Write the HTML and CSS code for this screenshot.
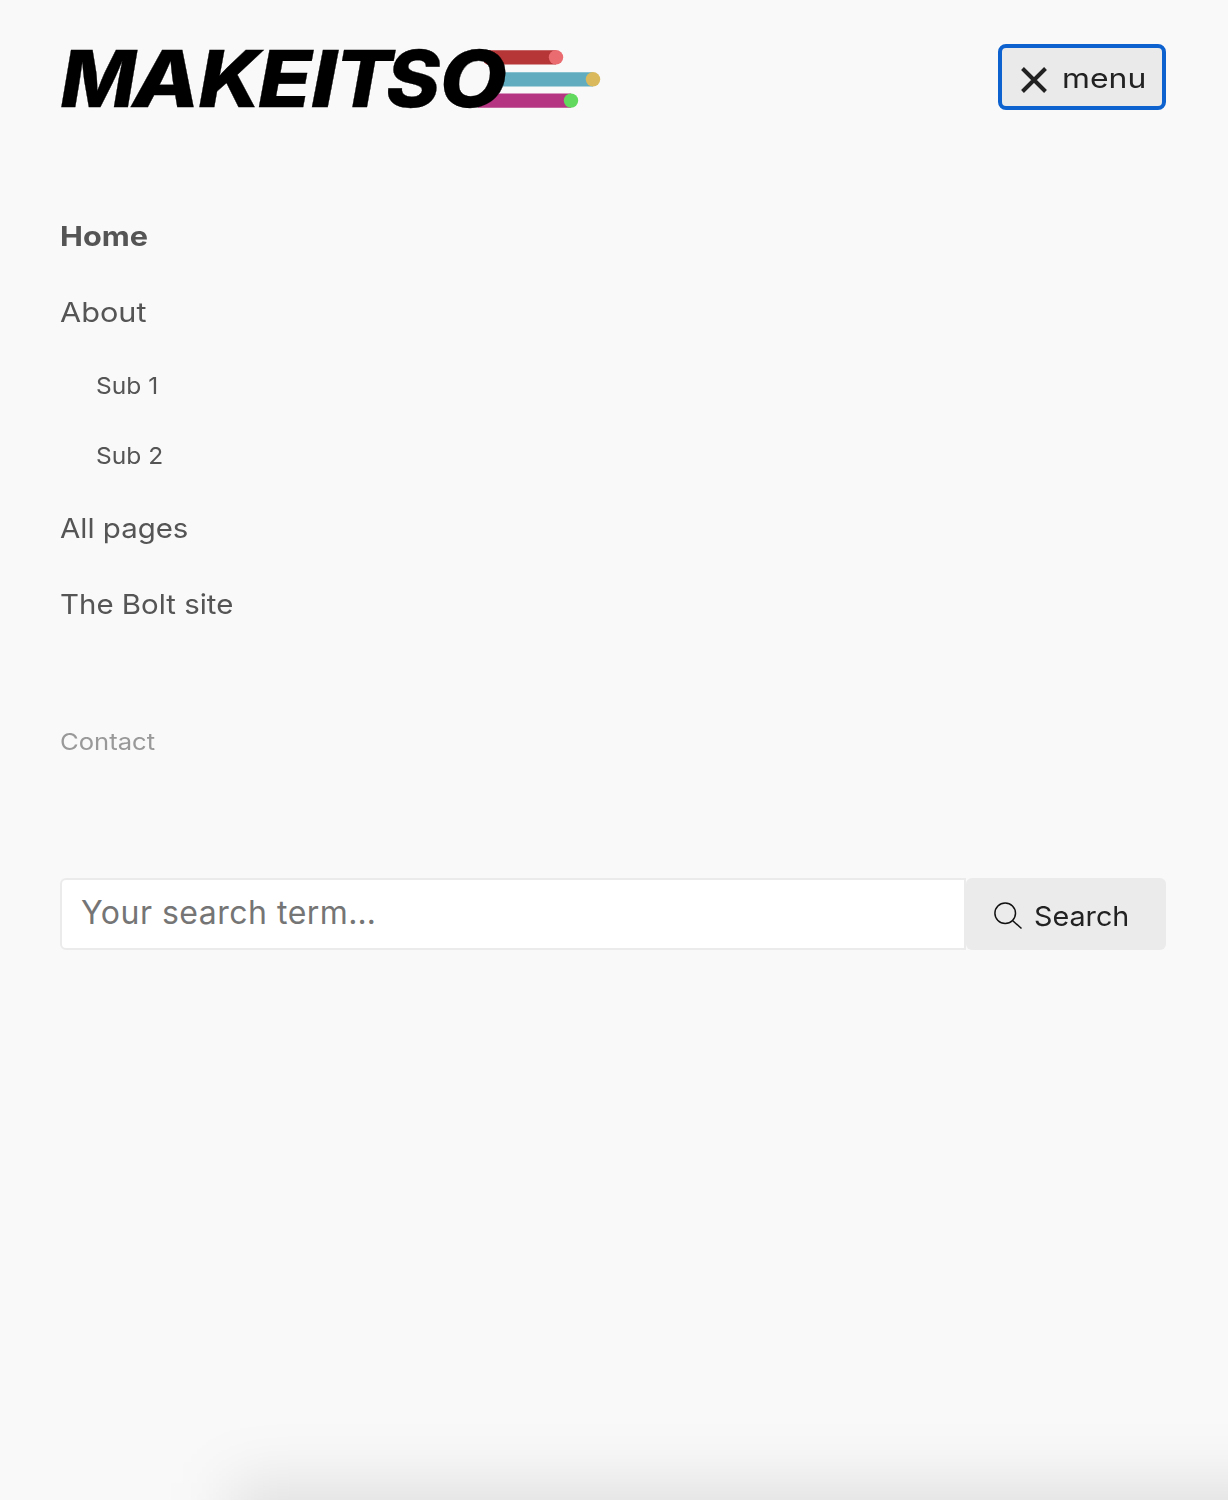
FILE: index.html
```
<!DOCTYPE html>
<html lang="en">
<head>
<meta charset="utf-8">
<title>MAKEITSO</title>
<link rel="stylesheet" href="styles.css">
</head>
<body>
<div class="page">
  <header class="header">
    <a class="logo" aria-label="MAKEITSO">
      <svg width="564" height="110" viewBox="50 24 564 110">
        <path class="red" d="M484 50.2H556V64.4H484z"/>
        <circle class="coral" cx="556" cy="57.3" r="7.2"/>
        <path class="blue" d="M480 72.2H593V86.4H480z"/>
        <circle class="gold" cx="593" cy="79.3" r="7.2"/>
        <path class="purple" d="M480 93.4H571V107.8H478z"/>
        <circle class="green" cx="571" cy="100.6" r="7.2"/>
        <ellipse class="counter" cx="474.500" cy="78.500" rx="18" ry="19"/>
        <g class="wordmark">
          <text x="60.500" y="106.800" textLength="75.500" lengthAdjust="spacingAndGlyphs">M</text>
          <text x="132.500" y="106.800" textLength="67" lengthAdjust="spacingAndGlyphs">A</text>
          <text x="198.500" y="106.800" textLength="62" lengthAdjust="spacingAndGlyphs">K</text>
          <text x="258" y="106.800" textLength="54" lengthAdjust="spacingAndGlyphs">E</text>
          <text x="311" y="106.800" textLength="26" lengthAdjust="spacingAndGlyphs">I</text>
          <text x="335" y="106.800" textLength="57" lengthAdjust="spacingAndGlyphs">T</text>
          <text x="386" y="106.800" textLength="54" lengthAdjust="spacingAndGlyphs">S</text>
          <text x="439.500" y="106.800" textLength="67.500" lengthAdjust="spacingAndGlyphs">O</text>
        </g>
      </svg>
    </a>
    <button class="toggle" type="button">
      <svg width="26" height="26" viewBox="0 0 26 26"><path d="M1.500 1.500L24.500 24.500M24.500 1.500L1.500 24.500"/></svg>
      <span>menu</span>
    </button>
  </header>
  <nav class="nav">
    <a class="item current">Home</a>
    <a class="item about">About</a>
    <a class="sub">Sub 1</a>
    <a class="sub second">Sub 2</a>
    <a class="item pages">All pages</a>
    <a class="item site">The Bolt site</a>
  </nav>
  <a class="contact">Contact</a>
  <form class="search">
    <input class="field" type="text" placeholder="Your search term…" aria-label="Search">
    <button class="submit" type="button">
      <svg width="28" height="28" viewBox="0 0 28 28"><circle cx="11.200" cy="11.200" r="10.300"/><path d="M18.500 18.500L27.500 26.500"/></svg>
      <span>Search</span>
    </button>
  </form>
  <div class="shade"></div>
</div>
</body>
</html>
```
FILE: styles.css
```
* { box-sizing: border-box; }
body {
  margin: 0;
  background: #f9f9f9;
  font-family: Inter, "Open Sans", sans-serif;
}
.page {
  position: relative;
  height: 1500px;
  padding: 44px 62px 0 60px;
  overflow: hidden;
}
.header {
  display: flex;
  justify-content: space-between;
  height: 66px;
}
.logo svg {
  display: block;
  margin: -20px 0 0 -10px;
}
.wordmark {
  font: italic 800 78px Inter, "Open Sans", sans-serif;
  fill: #000;
  stroke: #000;
  stroke-width: 0.3px;
}
.red { fill: #b63536; }
.coral { fill: #ea6c70; }
.blue { fill: #61adbf; }
.gold { fill: #d9b95c; }
.purple { fill: #b53582; }
.green { fill: #61d95f; }
.counter { fill: #f9f9f9; }
.toggle {
  display: flex;
  align-items: center;
  width: 168px;
  height: 66px;
  padding: 2px 0 0 19px;
  border: 4px solid #0d62cf;
  border-radius: 8px;
  background: #eaeaea;
  color: #222;
  font: 400 27.500px Inter, sans-serif;
}
.toggle svg {
  margin-top: 3px;
  stroke: #222;
  stroke-width: 4;
}
.toggle span {
  margin-left: 15px;
  transform: scaleX(1.16);
  transform-origin: left;
}
.nav {
  display: flex;
  flex-direction: column;
  align-items: flex-start;
  margin-top: 88px;
  color: #555;
}
.item {
  font-size: 27.500px;
  line-height: 76px;
  transform: scaleX(1.07);
  transform-origin: left;
}
.current {
  font-weight: 650;
  transform: scaleX(1.115);
}
.about { transform: scaleX(1.115); }
.sub {
  margin-left: 36px;
  padding-top: 1px;
  font-size: 23.500px;
  line-height: 69px;
  transform: scaleX(1.045);
  transform-origin: left;
}
.contact {
  display: block;
  width: max-content;
  margin-top: 65px;
  color: #999;
  font-size: 23.500px;
  line-height: 70px;
  transform: scaleX(1.09);
  transform-origin: left;
}
.search {
  display: flex;
  height: 72px;
  margin: 101px 0 0;
}
.field {
  flex: 1;
  min-width: 0;
  padding: 0 19px 3px;
  border: 2px solid #ebebeb;
  border-radius: 6px 0 0 6px;
  background: #fff;
  font: 400 32px Inter, sans-serif;
  letter-spacing: 0.5px;
}
.field::placeholder { color: #757575; opacity: 1; }
.submit {
  display: flex;
  align-items: center;
  width: 200px;
  padding: 4px 0 0 28px;
  border: 0;
  border-radius: 6px;
  background: #ebebeb;
  color: #222;
  font: 400 27.500px Inter, sans-serif;
}
.submit svg {
  fill: none;
  stroke: #111;
  stroke-width: 1.500;
}
.submit span {
  margin-left: 12px;
  transform: scaleX(1.045);
  transform-origin: left;
}
.shade {
  position: absolute;
  top: 1483px;
  left: 230px;
  width: 1300px;
  height: 300px;
  background: rgba(0, 0, 0, 0.1);
  filter: blur(31px);
}
```
